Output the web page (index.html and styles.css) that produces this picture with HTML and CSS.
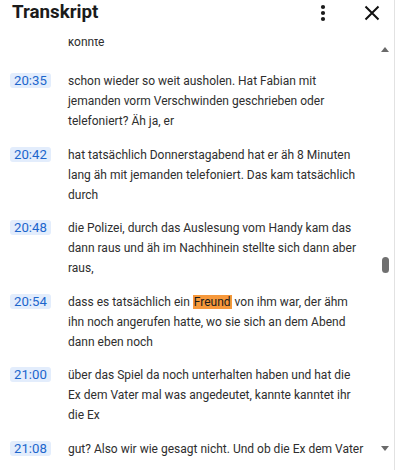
FILE: index.html
```html
<!DOCTYPE html>
<html lang="de">
<head>
<meta charset="utf-8">
<title>Transkript</title>
<link rel="stylesheet" href="styles.css">
</head>
<body>
<div class="panel">
  <header class="head">
    <h1 class="title">Transkript</h1>
    <div class="actions">
      <button class="icon-btn" aria-label="Mehr">
        <svg width="24" height="26" viewBox="0 0 24 26"><circle cx="12" cy="7" r="2.1"/><circle cx="12" cy="13" r="2.1"/><circle cx="12" cy="19" r="2.1"/></svg>
      </button>
      <button class="icon-btn" aria-label="Schließen">
        <svg width="24" height="26" viewBox="0 0 24 26"><path d="M5.5 6.5 L18.5 19.5 M18.5 6.5 L5.5 19.5" stroke="#111" stroke-width="2" fill="none"/></svg>
      </button>
    </div>
  </header>
  <div class="body">
    <div class="list">
      <div class="entry entry-tail">
        <div class="time"></div>
        <div class="text">konnte</div>
      </div>
      <div class="entry">
        <div class="time"><span class="stamp">20:35</span></div>
        <div class="text">schon wieder so weit ausholen. Hat Fabian mit<br>jemanden vorm Verschwinden geschrieben oder<br>telefoniert? Äh ja, er</div>
      </div>
      <div class="entry">
        <div class="time"><span class="stamp">20:42</span></div>
        <div class="text">hat tatsächlich Donnerstagabend hat er äh 8 Minuten<br>lang äh mit jemanden telefoniert. Das kam tatsächlich<br>durch</div>
      </div>
      <div class="entry">
        <div class="time"><span class="stamp">20:48</span></div>
        <div class="text">die Polizei, durch das Auslesung vom Handy kam das<br>dann raus und äh im Nachhinein stellte sich dann aber<br>raus,</div>
      </div>
      <div class="entry">
        <div class="time"><span class="stamp">20:54</span></div>
        <div class="text">dass es tatsächlich ein <mark class="hit">Freund</mark> von ihm war, der ähm<br>ihn noch angerufen hatte, wo sie sich an dem Abend<br>dann eben noch</div>
      </div>
      <div class="entry">
        <div class="time"><span class="stamp">21:00</span></div>
        <div class="text">über das Spiel da noch unterhalten haben und hat die<br>Ex dem Vater mal was angedeutet, kannte kanntet ihr<br>die Ex</div>
      </div>
      <div class="entry">
        <div class="time"><span class="stamp">21:08</span></div>
        <div class="text">gut? Also wir wie gesagt nicht. Und ob die Ex dem Vater</div>
      </div>
    </div>
    <div class="scrollbar">
      <span class="arrow arrow-up"></span>
      <div class="track"><span class="thumb"></span></div>
      <span class="arrow arrow-down"></span>
    </div>
  </div>
</div>
</body>
</html>
```
FILE: styles.css
```css
* { box-sizing: border-box; }
html, body { margin: 0; padding: 0; background: #fff; }
body {
  font-family: Roboto, "Liberation Sans", Arial, sans-serif;
  color: #333;
  height: 470px;
  overflow: hidden;
}
.panel {
  width: 395px;
  height: 470px;
  border-right: 1px solid #e2e2e2;
  display: flex;
  flex-direction: column;
}
.head {
  height: 39px;
  flex: none;
  display: flex;
  align-items: flex-start;
  justify-content: space-between;
  padding: 0 10px 0 12px;
}
.title {
  margin: 0;
  font-size: 18.75px;
  line-height: 25px;
  font-weight: 700;
  color: #1b1b1b;
}
.actions {
  display: flex;
  gap: 25px;
}
.icon-btn {
  border: 0;
  background: none;
  padding: 0;
  width: 24px;
  height: 26px;
  display: block;
  cursor: pointer;
}
.icon-btn svg { display: block; fill: #1b1b1b; }
.body {
  flex: 1;
  min-height: 0;
  display: flex;
  overflow: hidden;
}
.list {
  flex: 1;
  min-width: 0;
  overflow: hidden;
}
.entry {
  display: flex;
  margin-bottom: 13.6px;
  font-size: 12px;
  line-height: 20px;
}
.entry-tail {
  margin-top: -6.6px;
  margin-bottom: 18.5px;
}
.time {
  width: 68px;
  flex: none;
  padding: 2.1px 0 0 10px;
}
.stamp {
  display: block;
  width: fit-content;
  padding: 0 4px;
  line-height: 15px;
  border-radius: 3px;
  background: #e3edfc;
  color: #1c66cc;
  font-size: 13.2px;
}
.text {
  flex: 1;
  white-space: nowrap;
  color: #2e2e2e;
}
.hit {
  background: #f6983b;
  color: #1a1a1a;
  padding: 0 1px;
}
.scrollbar {
  width: 18px;
  flex: none;
  display: flex;
  flex-direction: column;
  align-items: center;
  padding: 8px 0 19px;
}
.arrow {
  width: 0;
  height: 0;
  border-left: 4px solid transparent;
  border-right: 4px solid transparent;
  flex: none;
}
.arrow-up { border-bottom: 5px solid #6a6a6a; }
.arrow-down { border-top: 5px solid #6a6a6a; }
.track {
  flex: 1;
  display: flex;
  flex-direction: column;
  align-items: center;
}
.thumb {
  display: block;
  width: 7px;
  height: 16px;
  border-radius: 4px;
  background: #707070;
  margin-top: 205px;
}
```
